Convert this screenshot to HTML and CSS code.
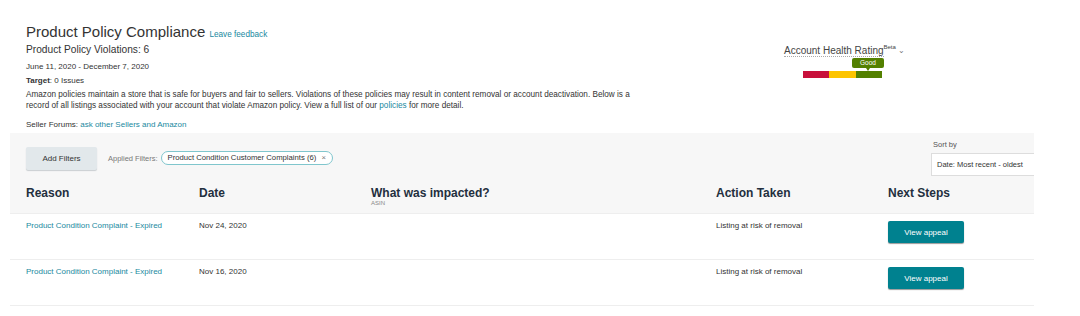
FILE: index.html
```html
<!DOCTYPE html>
<html>
<head>
  <meta charset="UTF-8"/>
  <title>Product Policy Compliance</title>
  <link rel="stylesheet" href="styles.css">
</head>
<body>
  <div class="top">
    <div class="intro">
      <h1>Product Policy Compliance <a class="feedback" href="#">Leave feedback</a></h1>
      <div class="count">Product Policy Violations: 6</div>
      <div class="dates">June 11, 2020 - December 7, 2020</div>
      <div class="target"><b>Target</b>: 0 Issues</div>
      <p class="about">
        Amazon policies maintain a store that is safe for buyers and fair to sellers. Violations of these policies may result in content removal or account deactivation. Below is a<br>
        record of all listings associated with your account that violate Amazon policy. View a full list of our <a href="#">policies</a> for more detail.
      </p>
      <div class="forums">Seller Forums: <a href="#">ask other Sellers and Amazon</a></div>
    </div>

    <div class="health">
      <div class="healthTitle"><span class="dotted">Account Health Rating</span><sup>Beta</sup><span class="chev">&#8964;</span></div>
      <div class="meter">
        <span class="seg red"></span><span class="seg yellow"></span><span class="seg green"></span>
        <span class="badge">Good</span>
      </div>
    </div>
  </div>

  <div class="panel">
    <div class="filters">
      <button class="addFilters">Add Filters</button>
      <span class="applied">Applied Filters:</span>
      <span class="chip">Product Condition Customer Complaints (6) <span class="x">&#215;</span></span>
      <div class="sort">
        <div class="sortLabel">Sort by</div>
        <div class="select">Date: Most recent - oldest</div>
      </div>
    </div>
    <div class="grid head">
      <div>Reason</div>
      <div>Date</div>
      <div>What was impacted?<div class="sub">ASIN</div></div>
      <div>Action Taken</div>
      <div>Next Steps</div>
    </div>
  </div>

  <div class="grid row">
    <div><a href="#">Product Condition Complaint - Expired</a></div>
    <div>Nov 24, 2020</div>
    <div></div>
    <div>Listing at risk of removal</div>
    <div><button class="appeal">View appeal</button></div>
  </div>
  <div class="grid row">
    <div><a href="#">Product Condition Complaint - Expired</a></div>
    <div>Nov 16, 2020</div>
    <div></div>
    <div>Listing at risk of removal</div>
    <div><button class="appeal">View appeal</button></div>
  </div>
</body>
</html>
```

FILE: styles.css
```css
body {
  margin: 0;
  font-family: "Liberation Sans", Arial, sans-serif;
  color: #333;
  background: #fff;
}
a {
  color: #2189a0;
  text-decoration: none;
}

.top {
  display: grid;
  grid-template-columns: 758px 1fr;
  padding-left: 26px;
}
h1 {
  margin: 22px 0 0 0;
  font-size: 15px;
  font-weight: normal;
  line-height: 20px;
  color: #333;
}
a.feedback {
  font-size: 8.2px;
}
div.count {
  font-size: 10.2px;
  line-height: 14px;
  margin-top: -2px;
}
div.dates {
  font-size: 8px;
  line-height: 12px;
  margin-top: 4px;
}
div.target {
  font-size: 8px;
  line-height: 12px;
  margin-top: 2px;
}
p.about {
  width: 640px;
  font-size: 8.2px;
  line-height: 11px;
  margin: 2px 0 0 0;
}
div.forums {
  font-size: 8px;
  line-height: 12px;
  margin-top: 8px;
}

.health {
  padding-top: 44px;
}
.healthTitle {
  font-size: 10px;
  color: #444;
  line-height: 14px;
  height: 14px;
}
.dotted {
  border-bottom: 1px dotted #aaa;
}
.healthTitle sup {
  font-size: 6px;
  line-height: 1;
  vertical-align: top;
}
.chev {
  font-size: 8px;
  color: #777;
  margin-left: 2px;
  vertical-align: top;
  line-height: 14px;
}
.meter {
  position: relative;
  display: flex;
  margin: 13px 0 0 19px;
  width: 79px;
  height: 7px;
}
.seg {
  flex: 1;
}
.red { background: #c8103b; }
.yellow { background: #fdc400; }
.green { background: #538000; }
.badge {
  position: absolute;
  left: 49px;
  top: -13px;
  width: 32px;
  height: 10px;
  border-radius: 2px;
  background: #538000;
  color: #fff;
  font-size: 6.5px;
  line-height: 10px;
  text-align: center;
}
.badge:after {
  content: "";
  position: absolute;
  left: 14px;
  bottom: -3px;
  border-left: 2px solid transparent;
  border-right: 2px solid transparent;
  border-top: 3px solid #538000;
}

.panel {
  margin: 2px 46px 0 10px;
  background: #f7f7f7;
  overflow: hidden;
}
.filters {
  display: flex;
  align-items: flex-start;
  padding-left: 16px;
  height: 38px;
}
button.addFilters {
  margin-top: 14px;
  width: 71px;
  height: 23px;
  border: none;
  border-radius: 2px;
  background: #e2e8eb;
  box-shadow: 0 1px 1px #c9ced1;
  font-family: inherit;
  font-size: 8px;
  color: #333;
  padding: 0;
}
.applied {
  margin: 18px 0 0 11px;
  line-height: 15px;
  font-size: 7.5px;
  color: #777;
}
.chip {
  margin: 18px 0 0 3px;
  height: 12px;
  line-height: 12px;
  padding: 0 6px;
  border: 1.5px solid #80c6cd;
  border-radius: 8px;
  background: #fff;
  font-size: 7.7px;
  color: #333;
}
.chip .x {
  color: #777;
  margin-left: 3px;
}
.sort {
  margin: 7px -20px 0 auto;
}
.sortLabel {
  font-size: 7.5px;
  color: #555;
  margin-left: 2px;
  line-height: 10px;
}
.select {
  margin-top: 3px;
  width: 116px;
  height: 21px;
  line-height: 21px;
  padding-left: 5px;
  background: #fff;
  border: 1px solid #ddd;
  font-size: 7.5px;
  color: #333;
}

.grid {
  display: grid;
  grid-template-columns: 173px 172px 345px 172px 1fr;
  padding-left: 16px;
}
.head {
  height: 42px;
  align-items: start;
  font-weight: bold;
  font-size: 12px;
  line-height: 14px;
  color: #232f3e;
}
.head > div {
  padding-top: 15px;
}
.head .sub {
  padding-top: 0;
  font-weight: normal;
  font-size: 6px;
  line-height: 7px;
  color: #888;
}
.row {
  margin: 0 46px 0 10px;
  height: 45px;
  border-top: 1px solid #eee;
  font-size: 8px;
  color: #333;
  line-height: 10px;
}
.row:last-child {
  border-bottom: 1px solid #eee;
}
.row > div {
  padding-top: 7px;
}
button.appeal {
  width: 76px;
  height: 22px;
  border: none;
  border-radius: 2px;
  background: #00818f;
  box-shadow: 0 1px 1px #999;
  color: #fff;
  font-family: inherit;
  font-size: 8px;
}
```
